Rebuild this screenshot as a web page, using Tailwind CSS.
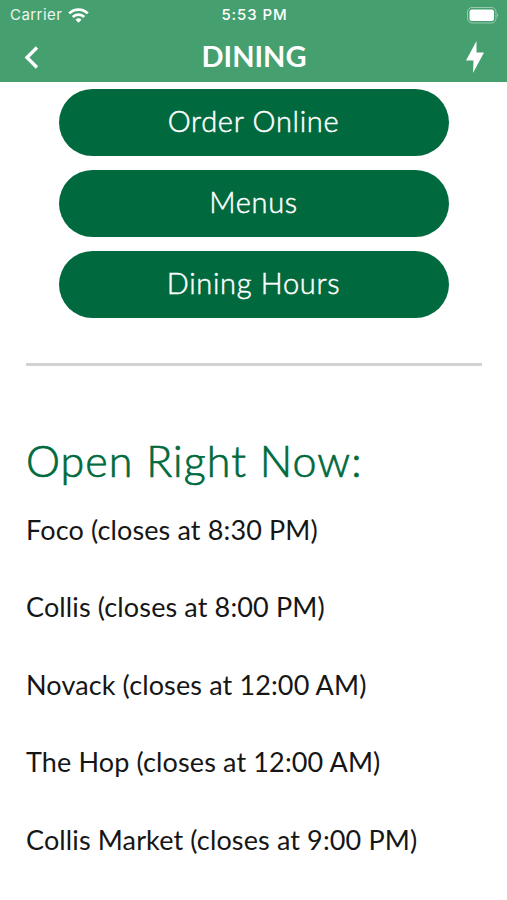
<!DOCTYPE html>
<html lang="en">
<head>
  <meta charset="UTF-8">
  <meta name="viewport" content="width=device-width, initial-scale=1.0">
  <title>Dining</title>
  <script src="https://cdn.jsdelivr.net/npm/@tailwindcss/browser@4"></script>
</head>
<body class="bg-white font-['Lato',sans-serif] h-[900px] overflow-hidden">
  <!-- Header -->
  <header class="bg-[#459f6e] text-white h-[82px]">
    <div class="grid grid-cols-3 items-center h-[30px] pl-2.5 pr-2 font-['Inter',sans-serif] text-[15px]">
      <div class="flex items-center gap-1.5">
        <span class="tracking-[0.45px] text-white/90">Carrier</span>
        <svg width="21" height="15" viewBox="0 0 21 15" fill="none" stroke="currentColor" stroke-width="2.7">
          <path d="M1.2 5.4a13.2 13.2 0 0 1 18.6 0"/>
          <path d="M4.7 9a8.3 8.3 0 0 1 11.6 0"/>
          <path d="M10.5 14.8l-3-3a4.3 4.3 0 0 1 6 0z" fill="currentColor" stroke="none"/>
        </svg>
      </div>
      <span class="justify-self-center font-medium tracking-[0.9px]">5:53 PM</span>
      <svg class="justify-self-end" width="32" height="17" viewBox="0 0 32 17">
        <rect x=".5" y=".5" width="28.5" height="15.5" rx="4.5" fill="none" stroke="currentColor" opacity=".45"/>
        <rect x="2.5" y="2.5" width="24.5" height="11.5" rx="2.5" fill="currentColor"/>
        <path d="M30.2 6v4.6q2-2.3 0-4.6z" fill="currentColor" opacity=".5"/>
      </svg>
    </div>
    <div class="grid grid-cols-3 items-center h-[52px] pl-6 pr-[23px] pt-0.5">
      <svg width="15" height="23" viewBox="0 0 15 23" fill="none" stroke="currentColor" stroke-width="3.4"><path d="M13 1.5L3 11.5l10 10"/></svg>
      <h1 class="justify-self-center pb-[3px] text-[29px] font-bold">DINING</h1>
      <svg class="justify-self-end" width="18" height="32" viewBox="0 0 18 32" fill="currentColor"><path d="M10.5 0L0 19.5h7.5L7 32 18 11.5h-7.5z"/></svg>
    </div>
  </header>

  <!-- Links -->
  <nav class="flex flex-col gap-3.5 px-[58.5px] pt-[7px] text-[29px] font-light tracking-[0.7px] text-white [-webkit-text-stroke:0.5px]">
    <a class="flex justify-center items-center h-[67px] pb-1 rounded-full bg-[#006a3e]">Order Online</a>
    <a class="flex justify-center items-center h-[67px] pb-1 rounded-full bg-[#006a3e]">Menus</a>
    <a class="flex justify-center items-center h-[67px] pb-1 rounded-full bg-[#006a3e]">Dining Hours</a>
  </nav>
  <hr class="ml-[26px] mr-[25px] mt-[45px] border-0 h-[3px] bg-[#d2d2d2]">

  <!-- Open places -->
  <main class="px-[26px] pt-[65px] text-[#161616]">
    <h2 class="text-[43px] leading-[60px] font-light tracking-[1.05px] text-[#006a3e] [-webkit-text-stroke:0.7px]">Open Right Now:</h2>
    <ul class="flex flex-col gap-[37.5px] pt-[18.5px] text-[27px] leading-10 tracking-[0.13px]">
      <li>Foco (closes at 8:30 PM)</li>
      <li>Collis (closes at 8:00 PM)</li>
      <li>Novack (closes at 12:00 AM)</li>
      <li>The Hop (closes at 12:00 AM)</li>
      <li>Collis Market (closes at 9:00 PM)</li>
    </ul>
  </main>
</body>
</html>
